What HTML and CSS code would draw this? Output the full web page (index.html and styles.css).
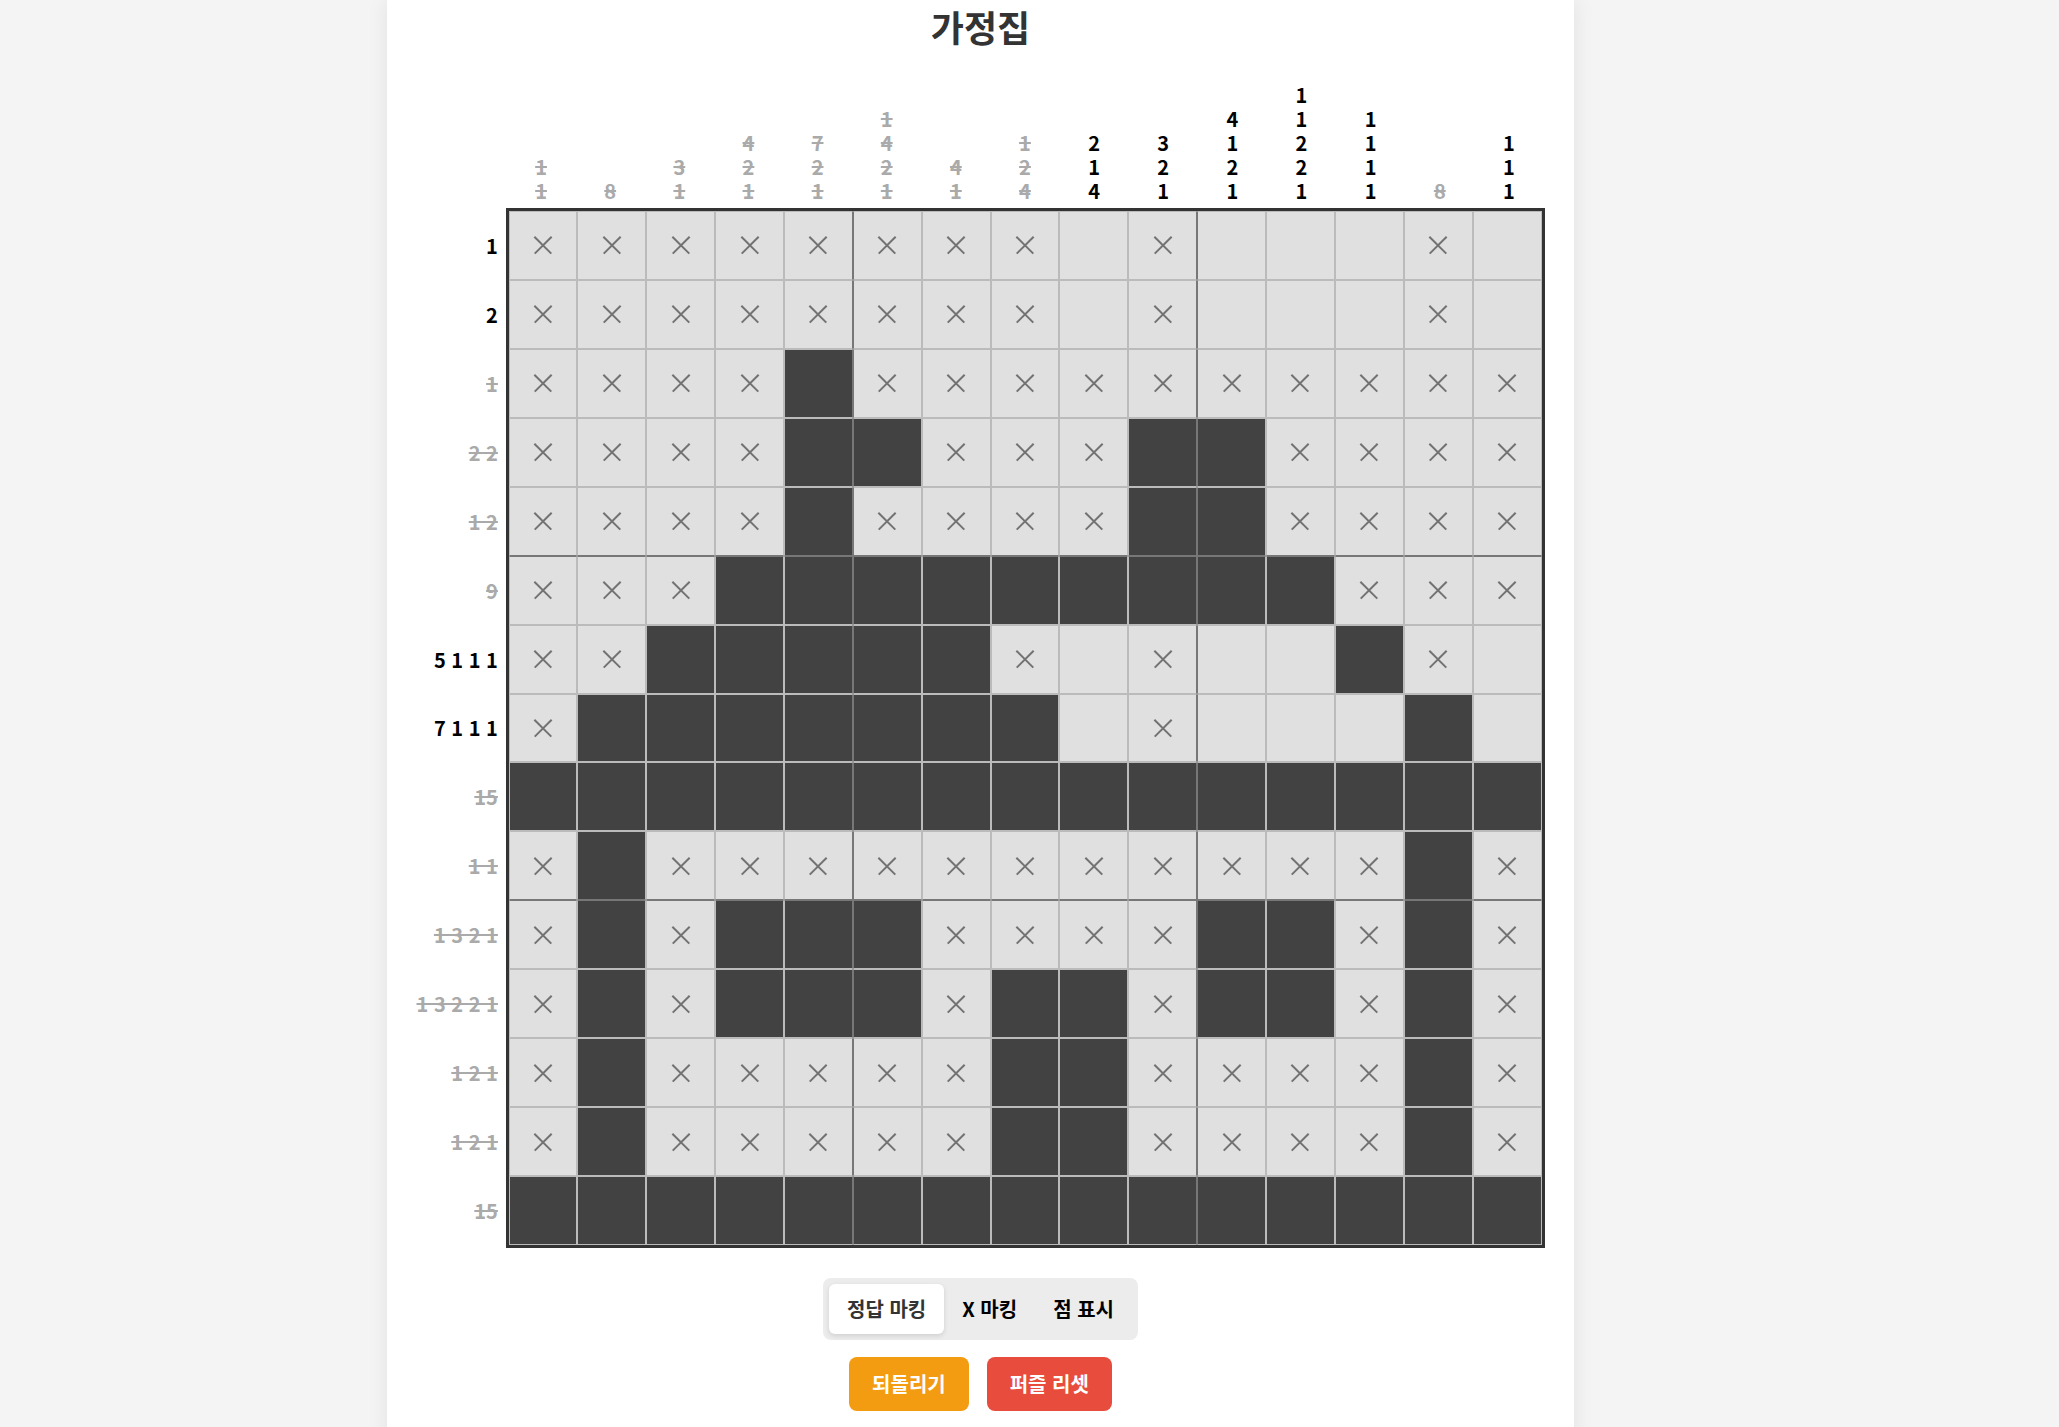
FILE: index.html
```html
<!DOCTYPE html>
<html lang="ko">
<head>
<meta charset="utf-8">
<title>가정집</title>
<link rel="stylesheet" href="styles.css">
</head>
<body>
<div class="card">
  <h1 class="title">가정집</h1>
  <div class="board">
    <div class="corner"></div>
    <div class="col-clues">
      <div class="col-clue done"><span>1</span><span>1</span></div>
      <div class="col-clue done"><span>8</span></div>
      <div class="col-clue done"><span>3</span><span>1</span></div>
      <div class="col-clue done"><span>4</span><span>2</span><span>1</span></div>
      <div class="col-clue done"><span>7</span><span>2</span><span>1</span></div>
      <div class="col-clue done"><span>1</span><span>4</span><span>2</span><span>1</span></div>
      <div class="col-clue done"><span>4</span><span>1</span></div>
      <div class="col-clue done"><span>1</span><span>2</span><span>4</span></div>
      <div class="col-clue"><span>2</span><span>1</span><span>4</span></div>
      <div class="col-clue"><span>3</span><span>2</span><span>1</span></div>
      <div class="col-clue"><span>4</span><span>1</span><span>2</span><span>1</span></div>
      <div class="col-clue"><span>1</span><span>1</span><span>2</span><span>2</span><span>1</span></div>
      <div class="col-clue"><span>1</span><span>1</span><span>1</span><span>1</span></div>
      <div class="col-clue done"><span>8</span></div>
      <div class="col-clue"><span>1</span><span>1</span><span>1</span></div>
    </div>
    <div class="row-clues">
      <div class="row-clue"><span>1</span></div>
      <div class="row-clue"><span>2</span></div>
      <div class="row-clue done"><span>1</span></div>
      <div class="row-clue done"><span>2 2</span></div>
      <div class="row-clue done"><span>1 2</span></div>
      <div class="row-clue done"><span>9</span></div>
      <div class="row-clue"><span>5 1 1 1</span></div>
      <div class="row-clue"><span>7 1 1 1</span></div>
      <div class="row-clue done"><span>15</span></div>
      <div class="row-clue done"><span>1 1</span></div>
      <div class="row-clue done"><span>1 3 2 1</span></div>
      <div class="row-clue done"><span>1 3 2 2 1</span></div>
      <div class="row-clue done"><span>1 2 1</span></div>
      <div class="row-clue done"><span>1 2 1</span></div>
      <div class="row-clue done"><span>15</span></div>
    </div>
    <div class="grid">
      <!-- row 1 -->
      <div class="cell x"></div><div class="cell x"></div><div class="cell x"></div><div class="cell x"></div><div class="cell x"></div>
      <div class="cell x"></div><div class="cell x"></div><div class="cell x"></div><div class="cell"></div><div class="cell x"></div>
      <div class="cell"></div><div class="cell"></div><div class="cell"></div><div class="cell x"></div><div class="cell"></div>
      <!-- row 2 -->
      <div class="cell x"></div><div class="cell x"></div><div class="cell x"></div><div class="cell x"></div><div class="cell x"></div>
      <div class="cell x"></div><div class="cell x"></div><div class="cell x"></div><div class="cell"></div><div class="cell x"></div>
      <div class="cell"></div><div class="cell"></div><div class="cell"></div><div class="cell x"></div><div class="cell"></div>
      <!-- row 3 -->
      <div class="cell x"></div><div class="cell x"></div><div class="cell x"></div><div class="cell x"></div><div class="cell f"></div>
      <div class="cell x"></div><div class="cell x"></div><div class="cell x"></div><div class="cell x"></div><div class="cell x"></div>
      <div class="cell x"></div><div class="cell x"></div><div class="cell x"></div><div class="cell x"></div><div class="cell x"></div>
      <!-- row 4 -->
      <div class="cell x"></div><div class="cell x"></div><div class="cell x"></div><div class="cell x"></div><div class="cell f"></div>
      <div class="cell f"></div><div class="cell x"></div><div class="cell x"></div><div class="cell x"></div><div class="cell f"></div>
      <div class="cell f"></div><div class="cell x"></div><div class="cell x"></div><div class="cell x"></div><div class="cell x"></div>
      <!-- row 5 -->
      <div class="cell x"></div><div class="cell x"></div><div class="cell x"></div><div class="cell x"></div><div class="cell f"></div>
      <div class="cell x"></div><div class="cell x"></div><div class="cell x"></div><div class="cell x"></div><div class="cell f"></div>
      <div class="cell f"></div><div class="cell x"></div><div class="cell x"></div><div class="cell x"></div><div class="cell x"></div>
      <!-- row 6 -->
      <div class="cell x"></div><div class="cell x"></div><div class="cell x"></div><div class="cell f"></div><div class="cell f"></div>
      <div class="cell f"></div><div class="cell f"></div><div class="cell f"></div><div class="cell f"></div><div class="cell f"></div>
      <div class="cell f"></div><div class="cell f"></div><div class="cell x"></div><div class="cell x"></div><div class="cell x"></div>
      <!-- row 7 -->
      <div class="cell x"></div><div class="cell x"></div><div class="cell f"></div><div class="cell f"></div><div class="cell f"></div>
      <div class="cell f"></div><div class="cell f"></div><div class="cell x"></div><div class="cell"></div><div class="cell x"></div>
      <div class="cell"></div><div class="cell"></div><div class="cell f"></div><div class="cell x"></div><div class="cell"></div>
      <!-- row 8 -->
      <div class="cell x"></div><div class="cell f"></div><div class="cell f"></div><div class="cell f"></div><div class="cell f"></div>
      <div class="cell f"></div><div class="cell f"></div><div class="cell f"></div><div class="cell"></div><div class="cell x"></div>
      <div class="cell"></div><div class="cell"></div><div class="cell"></div><div class="cell f"></div><div class="cell"></div>
      <!-- row 9 -->
      <div class="cell f"></div><div class="cell f"></div><div class="cell f"></div><div class="cell f"></div><div class="cell f"></div>
      <div class="cell f"></div><div class="cell f"></div><div class="cell f"></div><div class="cell f"></div><div class="cell f"></div>
      <div class="cell f"></div><div class="cell f"></div><div class="cell f"></div><div class="cell f"></div><div class="cell f"></div>
      <!-- row 10 -->
      <div class="cell x"></div><div class="cell f"></div><div class="cell x"></div><div class="cell x"></div><div class="cell x"></div>
      <div class="cell x"></div><div class="cell x"></div><div class="cell x"></div><div class="cell x"></div><div class="cell x"></div>
      <div class="cell x"></div><div class="cell x"></div><div class="cell x"></div><div class="cell f"></div><div class="cell x"></div>
      <!-- row 11 -->
      <div class="cell x"></div><div class="cell f"></div><div class="cell x"></div><div class="cell f"></div><div class="cell f"></div>
      <div class="cell f"></div><div class="cell x"></div><div class="cell x"></div><div class="cell x"></div><div class="cell x"></div>
      <div class="cell f"></div><div class="cell f"></div><div class="cell x"></div><div class="cell f"></div><div class="cell x"></div>
      <!-- row 12 -->
      <div class="cell x"></div><div class="cell f"></div><div class="cell x"></div><div class="cell f"></div><div class="cell f"></div>
      <div class="cell f"></div><div class="cell x"></div><div class="cell f"></div><div class="cell f"></div><div class="cell x"></div>
      <div class="cell f"></div><div class="cell f"></div><div class="cell x"></div><div class="cell f"></div><div class="cell x"></div>
      <!-- row 13 -->
      <div class="cell x"></div><div class="cell f"></div><div class="cell x"></div><div class="cell x"></div><div class="cell x"></div>
      <div class="cell x"></div><div class="cell x"></div><div class="cell f"></div><div class="cell f"></div><div class="cell x"></div>
      <div class="cell x"></div><div class="cell x"></div><div class="cell x"></div><div class="cell f"></div><div class="cell x"></div>
      <!-- row 14 -->
      <div class="cell x"></div><div class="cell f"></div><div class="cell x"></div><div class="cell x"></div><div class="cell x"></div>
      <div class="cell x"></div><div class="cell x"></div><div class="cell f"></div><div class="cell f"></div><div class="cell x"></div>
      <div class="cell x"></div><div class="cell x"></div><div class="cell x"></div><div class="cell f"></div><div class="cell x"></div>
      <!-- row 15 -->
      <div class="cell f"></div><div class="cell f"></div><div class="cell f"></div><div class="cell f"></div><div class="cell f"></div>
      <div class="cell f"></div><div class="cell f"></div><div class="cell f"></div><div class="cell f"></div><div class="cell f"></div>
      <div class="cell f"></div><div class="cell f"></div><div class="cell f"></div><div class="cell f"></div><div class="cell f"></div>
    </div>
  </div>
  <div class="controls">
    <div class="modes">
      <button class="mode active">정답 마킹</button>
      <button class="mode">X 마킹</button>
      <button class="mode">점 표시</button>
    </div>
    <div class="actions">
      <button class="btn undo">되돌리기</button>
      <button class="btn reset">퍼즐 리셋</button>
    </div>
  </div>
</div>
</body>
</html>
```
FILE: styles.css
```css
body {
  margin: 0;
  background: #f4f4f4;
  font-family: "Noto Sans CJK KR", "Noto Sans", sans-serif;
  color: #333;
}

.card {
  width: 1187px;
  margin-left: 387px;
  background: #fff;
  box-shadow: 0 0 20px rgba(0, 0, 0, 0.08);
  padding-bottom: 30px;
  display: flex;
  flex-direction: column;
  align-items: center;
}

.title {
  margin: 0;
  font-size: 36px;
  line-height: 52px;
  font-weight: 700;
  color: #333;
}

.board {
  display: grid;
  grid-template-columns: 89px 1039px;
  grid-template-rows: 156px 1040px;
}

.col-clues {
  display: grid;
  grid-template-columns: repeat(15, 1fr);
  padding: 0 1px 5px;
  align-items: end;
}

.col-clue {
  display: flex;
  flex-direction: column;
  align-items: center;
  font-size: 20px;
  line-height: 24px;
  font-weight: 700;
  color: #000;
}

.row-clues {
  display: grid;
  grid-template-rows: repeat(15, 1fr);
  padding: 3px 0;
}

.row-clue {
  display: flex;
  align-items: center;
  justify-content: flex-end;
  padding-right: 14px;
  font-size: 20px;
  font-weight: 700;
  color: #000;
  white-space: pre;
}

.done {
  color: #aaa;
}

.done span {
  text-decoration: line-through;
}

.grid {
  box-sizing: border-box;
  display: grid;
  grid-template-columns: repeat(15, 1fr);
  grid-template-rows: repeat(15, 1fr);
  border: 3px solid #333;
}

.cell {
  position: relative;
  background: #e0e0e0;
  border: 1px solid #bbb;
}

.cell.f {
  background: #424242;
}

.cell.x::before,
.cell.x::after {
  content: "";
  position: absolute;
  left: 50%;
  top: 50%;
  width: 24px;
  height: 1.5px;
  background: #727272;
  transform: translate(-50%, -50%) rotate(45deg);
}

.cell.x::after {
  transform: translate(-50%, -50%) rotate(-45deg);
}

/* thicker 5x5 dividers */
.cell:nth-child(15n+5),
.cell:nth-child(15n+10) {
  border-right-color: #777;
}

.cell:nth-child(15n+6),
.cell:nth-child(15n+11) {
  border-left-color: #777;
}

.cell:nth-child(n+61):nth-child(-n+75),
.cell:nth-child(n+136):nth-child(-n+150) {
  border-bottom-color: #777;
}

.cell:nth-child(n+76):nth-child(-n+90),
.cell:nth-child(n+151):nth-child(-n+165) {
  border-top-color: #777;
}

.controls {
  margin-top: 30px;
  display: flex;
  flex-direction: column;
  align-items: center;
  gap: 17px;
}

.modes {
  display: flex;
  background: #ececec;
  border-radius: 8px;
  padding: 6px;
}

.mode {
  font-family: inherit;
  font-size: 20px;
  font-weight: 700;
  line-height: 26px;
  padding: 12px 18px;
  border: 0;
  border-radius: 6px;
  background: transparent;
  color: #000;
}

.mode.active {
  background: #fff;
  color: #333;
  box-shadow: 0 2px 5px rgba(0, 0, 0, 0.12);
}

.actions {
  display: flex;
  gap: 18px;
}

.btn {
  font-family: inherit;
  font-size: 20px;
  font-weight: 700;
  line-height: 26px;
  padding: 14px 23px;
  border: 0;
  border-radius: 8px;
  color: #fff;
}

.undo {
  background: #f39c12;
}

.reset {
  background: #e74c3c;
}
```
